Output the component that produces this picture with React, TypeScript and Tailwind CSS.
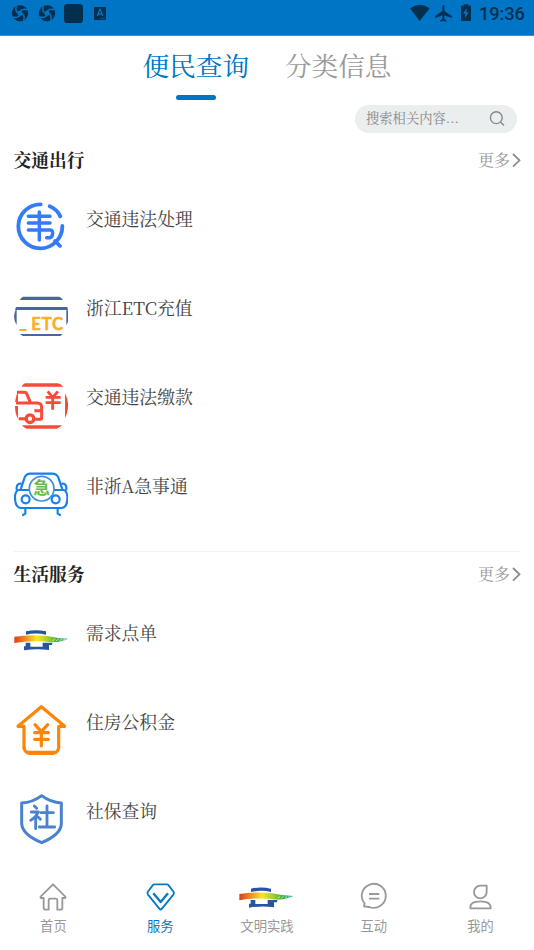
import type { ReactNode } from "react";

const SERIF =
  "font-['Noto_Serif_CJK_SC','Noto_Serif_SC','Source_Han_Serif_SC','Liberation_Serif','Noto_Sans_CJK_SC',serif]";
const SANS = "font-['Noto_Sans_CJK_SC',sans-serif]";

function Pinwheel({ x }: { x: number }) {
  return (
    <g transform={`translate(${x} 40)`}>
      <circle r="24.5" fill="#032f4f" />
      <path d="M-10-3L3-10L10 3L-3 10Z" fill="#0075c5" />
      {[0, 90, 180, 270].map((a) => (
        <path key={a} d="M-8-2Q-15-9-11-21" transform={`rotate(${a})`} fill="none" stroke="#0075c5" strokeWidth="4.5" />
      ))}
    </g>
  );
}

function StatusBar() {
  return (
    <header className="flex h-9 shrink-0 justify-between border-b border-[#3991d0] bg-[#0075c5]">
      <svg className="h-9 w-[130px]" viewBox="0 0 390 108">
        <Pinwheel x={60} />
        <Pinwheel x={141} />
        <rect x="192" y="12" width="57" height="57" rx="10" fill="#032f4f" />
        <rect x="282" y="21" width="36" height="39" rx="2" fill="#032f4f" />
        <path d="M292 48l7-20h2l7 20M295 42h10" fill="none" stroke="#0075c5" strokeWidth="4" />
        <path d="M301 55h12" fill="none" stroke="#0075c5" strokeWidth="2" />
      </svg>
      <div className="flex">
        <svg className="h-9 w-[70px]" viewBox="50 0 210 108">
          <g fill="#032f4f">
            <path d="M59 25Q88 3 118 25L88 63Z" />
            <path d="M156 17q3-4 6 0v16l22 15v6l-22-8v11l6 4v4l-9-3-9 3v-4l6-4V46l-21 8v-6l21-15Z" />
            <path d="M212 17h8v-4h14v4h8v46h-30Z" />
          </g>
          <path d="M229 24l-11 17h7l-2 14 12-18h-7Z" fill="#0075c5" />
        </svg>
        <span className="w-[57px] pt-[2px] pl-[2px] font-[Roboto,sans-serif] text-[18.3px] leading-6 font-medium tracking-[-0.1px] text-[#032f4f]">
          19:36
        </span>
      </div>
    </header>
  );
}

function LogoShape({ id }: { id: string }) {
  return (
    <>
      <defs>
        <linearGradient id={id}>
          <stop offset="0" stopColor="#dc3d20" />
          <stop offset=".2" stopColor="#ef8a22" />
          <stop offset=".42" stopColor="#f6e81c" />
          <stop offset=".62" stopColor="#a4cf2c" />
          <stop offset=".8" stopColor="#42ae48" />
          <stop offset="1" stopColor="#35b99c" />
        </linearGradient>
      </defs>
      <path d="M78 274Q108 267 138 274V284Q108 277 78 284Z" fill="#28559f" />
      <path d="M77 308H91V320H128V308H157L156 315H147V330Q110 325 72 331V319H77Z" fill="#28559f" />
      <path d="M43 290Q92 282 143 288Q175 296 205 296Q186 306 158 307Q96 299 43 309Z" fill={`url(#${id})`} />
      <path d="M158 302l7-4m4 4l7-5m4 4l6-3m4 2l5-2" fill="none" stroke="#e9f7e8" strokeWidth="2" />
    </>
  );
}

function Icon({ box, children }: { box: string; children: ReactNode }) {
  return (
    <svg className="size-[54px] shrink-0" viewBox={box} fill="none" strokeLinecap="round" strokeLinejoin="round">
      {children}
    </svg>
  );
}

const violation = (
  <Icon box="42 177 162 162">
    <g stroke="#347cf6" strokeWidth="11.5">
      <path d="M122 193A66 66 0 1 0 187 258" />
      <path d="M149 199Q171 208 181 229M165 303l15 15" />
      <path strokeWidth="10.5" d="M85 229H150M85 249H150M85 270H150Q161 270 157 286Q154 295 140 293M118 216V300" />
    </g>
  </Icon>
);

const etc = (
  <Icon box="42 24 162 162">
    <path d="M69 50H178Q184 52 189 60H59Q64 52 69 50M48 81H202L204 90H45ZM60 162H188L181 168H68Z" fill="#4965a3" />
    <path d="M50 84V135Q34 110 50 84M199 84V135Q215 110 199 84" fill="#4965a3" />
    <path d="M58 150H79" stroke="#fbad27" strokeWidth="6" strokeLinecap="butt" />
    <text x="94" y="149" fontFamily="Lato, sans-serif" fontWeight="700" fontSize="50" letterSpacing="2.4" fill="#fbad27" stroke="#fbad27" strokeWidth="1.5">
      ETC
    </text>
  </Icon>
);

const payment = (
  <Icon box="42 21 162 162">
    <path d="M75 40H174Q184 43 190 50H64Q69 43 75 40M66 166H186Q179 174 170 176H80Q72 174 66 166M195 70Q214 107 195 145Z" fill="#f64b38" />
    <path d="M51 70L45 95H54V65M45 108H54V146Q45 132 45 108" fill="#f64b38" />
    <g stroke="#f64b38" strokeWidth="9" strokeLinecap="butt">
      <path d="M51 67H73Q79 67 81 73L91 97M48 99H112Q125 99 125 113V143Q125 148 118 148H105M103 122H125M56 146H75" />
      <circle cx="90" cy="146" r="11.5" strokeWidth="10" />
      <path strokeWidth="8.5" d="M143 64L158 82L174 64M137 82H182M137 98H182M158 82V119" />
    </g>
  </Icon>
);

const urgent = (
  <Icon box="42 18 162 162">
    <g stroke="#1681ee" strokeWidth="6.5">
      <path d="M62 88L74 52Q79 41 91 41H157Q169 41 175 52L187 88" />
      <path d="M62 71Q49 70 50 88M187 71Q200 70 199 88M57 90H190Q198 90 202 107Q204 143 184 144H62Q44 143 45 107Q48 90 57 90Z" />
      <path d="M76 146V161L69 165M173 146V161L180 165" />
      <circle cx="77" cy="118" r="12" fill="#fff" />
      <circle cx="167" cy="118" r="12" fill="#fff" />
      <circle cx="125" cy="86" r="37" fill="#fff" stroke="#3c91d8" strokeWidth="5" />
    </g>
    <text x="125" y="103" textAnchor="middle" fontFamily="Noto Sans CJK SC" fontSize="50" fontWeight="700" fill="#64bc45">
      急
    </text>
  </Icon>
);

const order = (
  <Icon box="42 219 162 162">
    <LogoShape id="rainbow-list" />
  </Icon>
);

const housing = (
  <Icon box="42 36 162 162">
    <g stroke="#ff8508" strokeWidth="9.5">
      <path d="M72 109H54L124 50L194 109H176V174M72 109V174" />
      <path d="M72 174Q76 188 88 190H160Q173 188 176 174M80 187H168" />
      <path strokeWidth="9.5" d="M105 104L124 125L143 104M104 128H145M104 148H145M124 126V168" />
    </g>
  </Icon>
);

const social = (
  <Icon box="42 303 162 162">
    <path d="M125 317Q97 338 65 339V401Q67 434 125 458Q183 434 184 401V339Q151 337 125 317Z" stroke="#4a82cf" strokeWidth="9" />
    <path
      d="M103 348L110 355M94 366H115Q108 381 92 391M107 381V416M114 381L121 388M141 348V411M123 368H160M118 411H164"
      stroke="#4a82cf"
      strokeWidth="8.5"
    />
  </Icon>
);

function Section({ title, items }: { title: string; items: [string, ReactNode][] }) {
  return (
    <section>
      <div className="-mr-px -ml-[0.5px] flex h-7 items-center justify-between">
        <h2 className="text-[17.8px] leading-7 font-bold text-[#222]">{title}</h2>
        <a className="flex items-center text-[16px] leading-7 text-[#999]">
          更多
          <svg className="ml-[2px] h-4 w-[9px]" viewBox="0 0 9 16" fill="none" stroke="#8c8c8c" strokeWidth="1.8">
            <path d="M1 2L7.5 8.3L1 14.6" />
          </svg>
        </a>
      </div>
      <ul className="pt-[25px]">
        {items.map(([label, icon]) => (
          <li key={label} className="flex h-[89px] gap-[18px]">
            {icon}
            <span className="pt-[6px] text-[17.8px] leading-7 text-[#444]">{label}</span>
          </li>
        ))}
      </ul>
    </section>
  );
}

function NavItem({ label, box, active, children }: { label: string; box: string; active?: boolean; children: ReactNode }) {
  return (
    <div className={`flex flex-1 flex-col items-center pt-[11px] ${active ? "text-[#0879c7]" : "text-[#999]"}`}>
      <svg className="h-[30px] w-[60px]" viewBox={box} fill="none" stroke="currentColor" strokeWidth="5.5" strokeLinejoin="round">
        {children}
      </svg>
      <span className="mt-1 text-[13.3px] leading-5">{label}</span>
    </div>
  );
}

export default function App() {
  return (
    <div className={`flex h-[950px] w-[534px] flex-col overflow-hidden bg-white ${SERIF}`}>
      <StatusBar />
      <nav className="flex h-[69px] shrink-0 justify-center gap-[35.6px] pt-[9px] text-[26.7px] leading-10">
        <div className="flex flex-col items-center text-[#0075c5]">
          便民查询
          <i className="mt-[10px] h-[5px] w-10 rounded-full bg-[#0075c5]" />
        </div>
        <div className="text-[#999]">分类信息</div>
      </nav>
      <div className="flex h-[41px] shrink-0 justify-end pr-[17px]">
        <div className="flex h-7 w-[162px] items-center justify-between rounded-full bg-[#eaeeef] pr-3 pl-[11px] text-[13.3px] leading-7 text-[#888]">
          <span className="-mt-[2px]">搜索相关内容...</span>
          <svg className="size-4" viewBox="0 0 16 16" fill="none" stroke="#888" strokeWidth="1.4">
            <circle cx="7.3" cy="6.7" r="5.9" />
            <path d="M11.5 10.9L15 14.4" />
          </svg>
        </div>
      </div>
      <main className="h-[725px] shrink-0 overflow-hidden px-[14px]">
        <Section
          title="交通出行"
          items={[
            ["交通违法处理", violation],
            ["浙江ETC充值", etc],
            ["交通违法缴款", payment],
            ["非浙A急事通", urgent],
          ]}
        />
        <div className="-mt-[4px] mb-2 h-px bg-[#f2f2f2]" />
        <Section
          title="生活服务"
          items={[
            ["需求点单", order],
            ["住房公积金", housing],
            ["社保查询", social],
          ]}
        />
      </main>
      <footer className={`flex h-[79px] shrink-0 bg-white ${SANS}`}>
        <NavItem label="首页" box="70 36 180 90">
          <path d="M160 43L123 80Q121 84 125 84H132V113Q132 119 138 119H147V91Q147 86 152 86H168Q173 86 173 91V119H182Q188 119 188 113V84H195Q199 84 197 80Z" />
        </NavItem>
        <NavItem label="服务" box="391 36 180 90" active>
          <path d="M464 43H502Q505 43 507 46L522 66Q524 70 521 74L487 116Q483 121 479 116L445 74Q442 70 444 66L459 46Q461 43 464 43Z" />
          <path strokeWidth="7" d="M461 70L483 96L505 70" />
        </NavItem>
        <NavItem label="文明实践" box="711 36 180 90">
          <g transform="translate(675 -218)" stroke="none">
            <LogoShape id="rainbow-nav" />
          </g>
        </NavItem>
        <NavItem label="互动" box="101 36 180 90">
          <path d="M163 101A36 36 0 1 1 177 111L161 109ZM176 72H207M176 86H207" />
        </NavItem>
        <NavItem label="我的" box="422 36 180 90">
          <path d="M529 47V67A19 19 0 1 1 510 47ZM480 115Q478 94 510 94Q542 94 541 115Z" />
        </NavItem>
      </footer>
    </div>
  );
}
